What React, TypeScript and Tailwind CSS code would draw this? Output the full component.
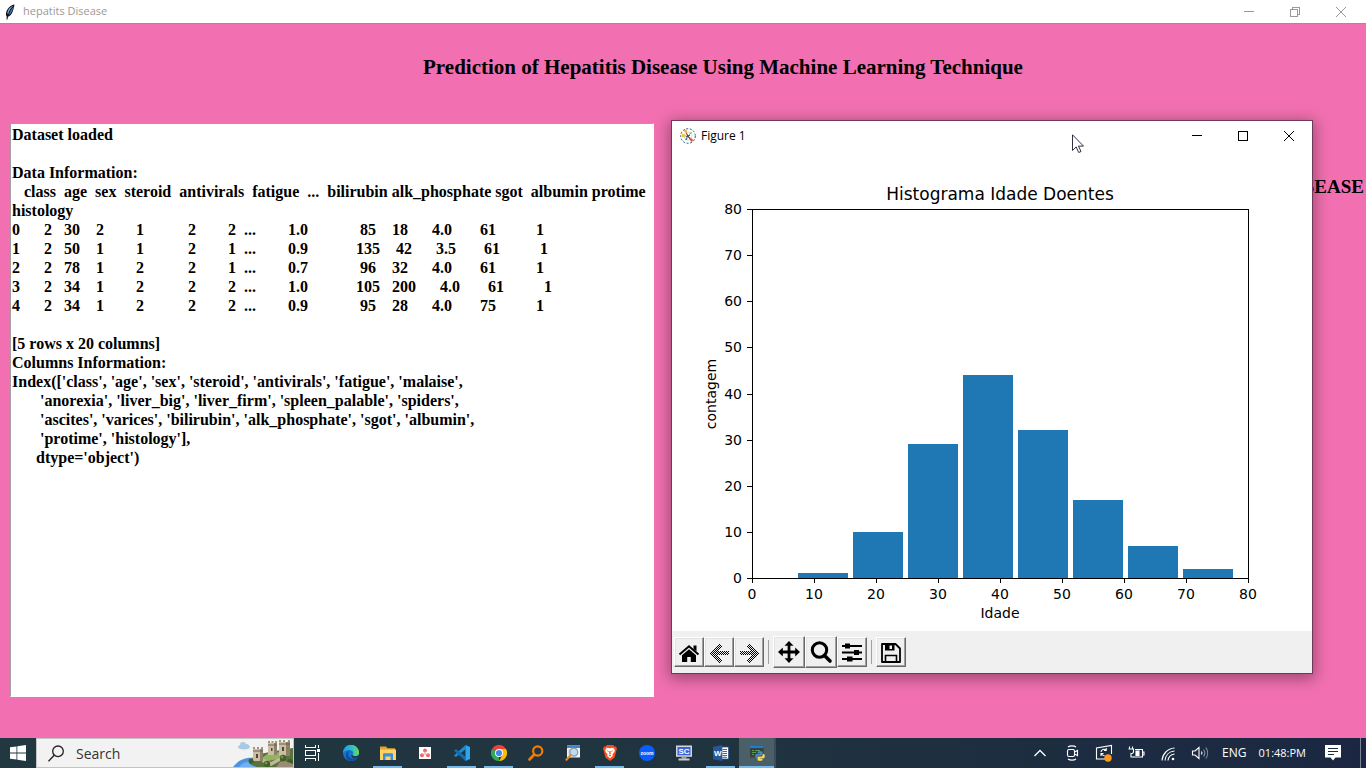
import { clsx } from "clsx";
import type { ReactNode } from "react";

const DATASET_OUTPUT = `Dataset loaded

Data Information:
   class  age  sex  steroid  antivirals  fatigue  ...  bilirubin alk_phosphate sgot  albumin protime  histology
0      2   30    2        1           2        2  ...        1.0             85    18      4.0       61          1
1      2   50    1        1           2        1  ...        0.9            135    42      3.5       61          1
2      2   78    1        2           2        1  ...        0.7             96    32      4.0       61          1
3      2   34    1        2           2        2  ...        1.0            105   200      4.0       61          1
4      2   34    1        2           2        2  ...        0.9             95    28      4.0       75          1

[5 rows x 20 columns]
Columns Information:
Index(['class', 'age', 'sex', 'steroid', 'antivirals', 'fatigue', 'malaise',
       'anorexia', 'liver_big', 'liver_firm', 'spleen_palable', 'spiders',
       'ascites', 'varices', 'bilirubin', 'alk_phosphate', 'sgot', 'albumin',
       'protime', 'histology'],
      dtype='object')`;

/* ---------- Window chrome ---------- */

interface WindowControlsProps {
  maximized?: boolean;
  className?: string;
}

function WindowControls({ maximized, className }: WindowControlsProps) {
  const button = "flex w-[46px] items-center justify-center hover:bg-gray-200";

  return (
    <div className={clsx("flex h-full", className)}>
      <button type="button" aria-label="Minimize" className={button}>
        <svg width="10" height="10" viewBox="0 0 10 10" stroke="currentColor" shapeRendering="crispEdges">
          <path d="M0 4.5h10" />
        </svg>
      </button>
      <button type="button" aria-label="Maximize" className={button}>
        <svg width="10" height="10" viewBox="0 0 10 10" fill="none" stroke="currentColor" shapeRendering="crispEdges">
          {maximized ? <path d="M.5 2.5h7v7h-7zM2.5 2.5v-2h7v7h-2" /> : <path d="M.5.5h9v9h-9z" />}
        </svg>
      </button>
      <button type="button" aria-label="Close" className={button}>
        <svg width="10" height="10" viewBox="0 0 10 10" stroke="currentColor">
          <path d="M0 0l10 10M10 0L0 10" />
        </svg>
      </button>
    </div>
  );
}

function FeatherIcon() {
  return (
    <svg width="10" height="16" viewBox="0 0 10 16">
      <path d="M9.4.4C5.5 1 1.6 4.6 1 9.500c-.1 1.300.2 2.400.7 3L1.500 15.500l1-.1.5-2.700c2.200-.6 4-3 4.800-5.500C8.600 5 9.300 2.500 9.400.4z" fill="#101418" />
      <path d="M8.300 1.500C5.500 2.600 2.800 5.500 2.300 9l.8 1.200C4 7 5.800 4 8.300 1.500z" fill="#7fb0ea" />
      <path d="M8.800 2.200C6.600 4.500 4.600 7.800 3.800 11c1.700-1 2.900-2.700 3.400-4.500.7-1.500 1.300-2.900 1.600-4.300z" fill="#4478bd" />
    </svg>
  );
}

function MatplotlibIcon() {
  return (
    <svg width="16" height="16" viewBox="0 0 16 16">
      <circle cx="8" cy="8" r="7.3" fill="#fff" stroke="#1f577f" strokeDasharray="2 1.6" />
      <circle cx="8" cy="8" r="4" fill="none" stroke="#bbb" strokeWidth=".5" />
      <path d="M8 8L3.500 2.500l3-1.300z" fill="#f7a35c" />
      <path d="M8 8L2 9.500 1.800 5.500z" fill="#e5c93f" />
      <path d="M8 8l5.500 4-2.300 2z" fill="#d9592c" />
      <path d="M8 8l3-4.500 1 1.200z" fill="#8cbf5a" />
      <path d="M8 8l-3 3.500 1.800.8z" fill="#446e9b" />
      <path d="M6.500 5.500l3 5M6 9l4-2" stroke="#333" />
    </svg>
  );
}

/* ---------- Histogram ---------- */

const AXES = { left: 80, top: 58, width: 496, height: 369 };
const MAX = 80;
const TICKS = [0, 10, 20, 30, 40, 50, 60, 70, 80];
const COUNTS = [1, 10, 29, 44, 32, 17, 7, 2];
const FIRST_AGE = 7;
const BIN = 8.875;

function xAt(age: number) {
  return AXES.left + (age / MAX) * AXES.width;
}

function yAt(count: number) {
  return AXES.top + AXES.height - (count / MAX) * AXES.height;
}

function Histogram() {
  return (
    <svg
      viewBox="0 0 640 480"
      className="block w-full bg-white font-['DejaVu_Sans',sans-serif] text-[14px]"
      role="img"
      aria-label="Histograma Idade Doentes"
    >
      <text x="328" y="49" textAnchor="middle" className="text-[17px]">
        Histograma Idade Doentes
      </text>

      <g fill="#1f77b4" shapeRendering="crispEdges">
        {COUNTS.map((count, i) => {
          const start = Math.round(xAt(FIRST_AGE + BIN * (i + 0.05)));
          const top = Math.round(yAt(count));
          return (
            <rect key={i} x={start} y={top} width={50} height={AXES.top + AXES.height - top} />
          );
        })}
      </g>

      <g stroke="#000" fill="none" shapeRendering="crispEdges">
        <rect x={AXES.left + 0.5} y={AXES.top + 0.5} width={AXES.width} height={AXES.height} />
        {TICKS.map((tick) => (
          <path
            key={tick}
            d={`M${Math.round(xAt(tick)) + 0.5} ${AXES.top + AXES.height}v5M${AXES.left} ${Math.round(yAt(tick)) + 0.5}h-5`}
          />
        ))}
      </g>

      {TICKS.map((tick) => (
        <g key={tick}>
          <text x={xAt(tick)} y="448" textAnchor="middle">{tick}</text>
          <text x="70" y={yAt(tick) + 5} textAnchor="end">{tick}</text>
        </g>
      ))}

      <text x="328" y="467" textAnchor="middle">Idade</text>
      <text transform="translate(44 243) rotate(-90)" textAnchor="middle">contagem</text>
    </svg>
  );
}

/* ---------- Figure toolbar ---------- */

interface ToolButtonProps {
  label: string;
  large?: boolean;
  disabled?: boolean;
  children: ReactNode;
}

function ToolButton({ label, large, disabled, children }: ToolButtonProps) {
  return (
    <button
      type="button"
      aria-label={label}
      disabled={disabled}
      className={clsx(
        "flex items-center justify-center border border-t-white border-l-white border-r-[#696969] border-b-[#696969] bg-[#f0f0f0] shadow-[inset_-1px_-1px_0_#a0a0a0,inset_1px_1px_0_#e3e3e3]",
        large ? "size-8" : "size-[30px]"
      )}
    >
      <svg width="24" height="24" viewBox="0 0 24 24">
        {children}
      </svg>
    </button>
  );
}

function ToolSeparator() {
  return <div className="mx-1 h-6 w-px bg-[#a0a0a0]" />;
}

function FigureToolbar() {
  return (
    <div className="flex h-[42px] items-center bg-[#f0f0f0] px-0.5">
      <ToolButton label="Home">
        <path d="M12 9.200l7 6V22h-5.200v-5h-3.600v5H5v-6.800z" />
        <path d="M2.500 14.500L12 6.300l9.500 8.200" fill="none" stroke="#000" strokeWidth="2" />
        <path d="M16.500 5.500h3v6l-3-2.600z" />
      </ToolButton>
      <ToolButton label="Back" disabled>
        <defs>
          <pattern id="stipple" width="2" height="2" patternUnits="userSpaceOnUse">
            <path d="M0 0h1v1H0zM1 1h1v1H1z" fill="#000" />
          </pattern>
        </defs>
        <path d="M2 13l10-10 3 3-5 5h11.500v4H10l5 5-3 3z" fill="url(#stipple)" shapeRendering="crispEdges" />
      </ToolButton>
      <ToolButton label="Forward" disabled>
        <path d="M22 13L12 3 9 6l5 5H2.500v4H14l-5 5 3 3z" fill="url(#stipple)" shapeRendering="crispEdges" />
      </ToolButton>
      <ToolSeparator />
      <ToolButton label="Pan" large>
        <path d="M12 1l4.500 4.800h-3.100v4.800h4.800V7.500L23 12l-4.800 4.500v-3.100h-4.800v4.800h3.100L12 23l-4.500-4.800h3.100v-4.800H5.800v3.100L1 12l4.800-4.500v3.100h4.800V5.800H7.500z" />
      </ToolButton>
      <ToolButton label="Zoom" large>
        <circle cx="10.5" cy="10" r="7.2" fill="none" stroke="#000" strokeWidth="3" />
        <path d="M15.500 15.500l5.500 5.500" stroke="#000" strokeWidth="3.6" strokeLinecap="round" />
      </ToolButton>
      <ToolButton label="Subplots">
        <path d="M2 6h20M2 12.500h20M2 19h20" stroke="#000" strokeWidth="2" />
        <path d="M5 3.500h5v5H5zM14 10h5v5h-5zM7 16.500h5.500v5H7z" />
      </ToolButton>
      <ToolSeparator />
      <ToolButton label="Save">
        <path d="M3 4h13.500l4.500 4.500V22H3z" fill="none" stroke="#000" strokeWidth="1.8" strokeLinejoin="round" />
        <path d="M6 4h9.500v6.500H6zM10.500 5.500v3.500h2.500V5.500z" fillRule="evenodd" />
        <path d="M6.500 22v-6.500h11V22" fill="none" stroke="#000" strokeWidth="1.6" />
      </ToolButton>
    </div>
  );
}

function FigureWindow() {
  return (
    <section
      aria-label="Figure 1"
      className="absolute top-24 right-[53px] w-[642px] border border-[#6f3a58] bg-white shadow-[0_3px_14px_2px_rgba(0,0,0,0.35)]"
    >
      <header className="flex h-[30px] items-center pl-2 text-black">
        <MatplotlibIcon />
        <h2 className="flex-1 pl-[5px] font-['Open_Sans',sans-serif] text-[12px]">Figure 1</h2>
        <WindowControls />
      </header>
      <Histogram />
      <FigureToolbar />

      {/* Mouse pointer */}
      <svg width="12" height="19" viewBox="0 0 12 19" className="absolute top-[13px] right-[228px]">
        <path d="M.5.8v15.700l3.700-3.600 2.500 5.600 2.300-1-2.500-5.400h5z" fill="#fff" stroke="#1a1a2a" strokeWidth=".9" />
      </svg>
    </section>
  );
}

/* ---------- Taskbar icons ---------- */

function TaskIcon({ children }: { children: ReactNode }) {
  return (
    <svg width="16" height="16" viewBox="0 0 16 16">
      {children}
    </svg>
  );
}

const EdgeIcon = (
  <TaskIcon>
    <defs>
      <linearGradient id="edgeTop" x1="0" x2="1">
        <stop offset="0" stopColor="#1c9be6" />
        <stop offset=".6" stopColor="#2fc3c0" />
        <stop offset="1" stopColor="#6edc4b" />
      </linearGradient>
    </defs>
    <circle cx="8" cy="8" r="8" fill="#1476cf" />
    <path d="M0 8a8 8 0 0 1 16-.5c.1 2.300-1.600 3.700-3.800 3.700-1.600 0-2.700-.6-2.700-1.200s.9-.8.8-2.200C10.100 6 8.400 4.900 6.300 4.900 3.500 4.900.8 6.200 0 8z" fill="url(#edgeTop)" />
    <path d="M5.300 8.500c0 4 3.500 6 8.200 4.700A8 8 0 0 1 8 16c-3.500-.3-5.500-3-5.200-6 .2-2 1.700-3.700 3.500-4.200C5.500 6.500 5.300 7.500 5.300 8.500z" fill="#0f4f9e" />
    <path d="M9.500 9.800c-.3.700 1.100 1.500 2.800 1.500 1.500 0 2.700-.6 3.400-1.800-.3 1.500-.9 2.700-1.700 3.500-2 .6-4.600.2-5.500-1.500-.4-.9 0-1.500 1-1.700z" fill="#233842" />
  </TaskIcon>
);

const ExplorerIcon = (
  <TaskIcon>
    <path d="M0 1.500h6l1.500 1.700H15v3H0z" fill="#e0a62b" />
    <path d="M0 4.500h16V15H0z" fill="#fcd364" />
    <path d="M3 15V9.500c0-.8.500-1.300 1.200-1.300h7.600c.7 0 1.200.5 1.200 1.300V15h-2.500v-3.500h-5V15z" fill="#3d8fd8" />
  </TaskIcon>
);

const ClusterIcon = (
  <TaskIcon>
    <path d="M2 2h12v12H2z" fill="#fff" />
    <g fill="#ef6464">
      <circle cx="8" cy="5.5" r="1.9" />
      <circle cx="5" cy="10.3" r="2" />
      <circle cx="11" cy="10.3" r="2" />
    </g>
    <path d="M8 6v3M5 10l3-1 3 1" stroke="#ef9a9a" strokeWidth=".7" fill="none" />
  </TaskIcon>
);

const VsCodeIcon = (
  <TaskIcon>
    <path d="M11.500 4.300L2 12 .3 10.900v-.7L11.500.1z" fill="#1f8ad2" />
    <path d="M11.500 11.700L2 4 .3 5.200v.7L11.500 15.900z" fill="#0f6fb5" />
    <path d="M11.500 0L16 2v12l-4.500 2z" fill="#2ba5f0" />
  </TaskIcon>
);

const ChromeIcon = (
  <TaskIcon>
    <path d="M8 8L1 4a8 8 0 0 1 14 0z" fill="#ea4335" />
    <path d="M8 8v8A8 8 0 0 1 1 4z" fill="#34a853" />
    <path d="M8 4h7A8 8 0 0 1 8 16l3.500-6z" fill="#fbbc04" />
    <circle cx="8" cy="8" r="4" fill="#fff" />
    <circle cx="8" cy="8" r="3.1" fill="#4285f4" />
  </TaskIcon>
);

const OrangeSearchIcon = (
  <TaskIcon>
    <circle cx="9.7" cy="6" r="4.6" fill="none" stroke="#f57c00" strokeWidth="2.2" />
    <path d="M6.300 9.500L1.500 14.500" stroke="#f57c00" strokeWidth="2.6" strokeLinecap="round" />
  </TaskIcon>
);

const EventViewerIcon = (
  <TaskIcon>
    <path d="M2 .5h13v12H2z" fill="#f3f4f5" />
    <path d="M2 .5h13V3H2z" fill="#3f82c9" />
    <path d="M3.500 5h4M3.500 7h3M3.500 9h3" stroke="#999" strokeWidth=".8" />
    <circle cx="8.8" cy="7.2" r="4" fill="#b9dcf3" stroke="#8b9aa5" strokeWidth="1.2" />
    <path d="M5.800 10L1.500 14.700" stroke="#d78a3c" strokeWidth="2.2" strokeLinecap="round" />
  </TaskIcon>
);

const BraveIcon = (
  <TaskIcon>
    <path d="M5 0h6l1.500 1.500H14L15 4l-.6 1.500-1.600 6.300c-.2.700-.5 1.100-1.100 1.500L8 16l-3.700-2.700c-.6-.4-.9-.8-1.100-1.500L1.600 5.500 1 4l1-2.500h1.500z" fill="#f4511e" />
    <path d="M8 3.200l3.300-.5 1.500 2.300-.5 2-2 2.500.6 1.300L8 13.200 5.100 10.800l.6-1.300-2-2.500-.5-2 1.500-2.300z" fill="#fff" />
    <path d="M4.500 5.500l2.300.6L6.500 7zM11.500 5.500l-2.300.6.3.9zM7.400 6h1.200l.2 3L8 9.500 7.200 9zM6.500 10.500L8 9.800l1.500.7L8 11.500z" fill="#f4511e" />
  </TaskIcon>
);

const ZoomIcon = (
  <TaskIcon>
    <circle cx="8" cy="8" r="8" fill="#0b5cff" />
    <text x="8" y="10" textAnchor="middle" fill="#fff" className="font-['Liberation_Sans',sans-serif] text-[5px] font-bold">
      zoom
    </text>
  </TaskIcon>
);

const SafeClientIcon = (
  <TaskIcon>
    <path d="M0 .5h16v11.300H0z" fill="#d5d6da" />
    <path d="M1.500 2h13v8.300h-13z" fill="#3f62d8" />
    <path d="M5.500 11.800h5v2h-5z" fill="#9a9ba0" />
    <path d="M2.500 13.500h11v2h-11z" fill="#c9cace" />
    <text x="8" y="9" textAnchor="middle" fill="#fff" className="font-['Liberation_Sans',sans-serif] text-[8px] font-bold">
      SC
    </text>
  </TaskIcon>
);

const WordIcon = (
  <TaskIcon>
    <path d="M8 2h7.500v12H8z" fill="#fff" stroke="#2a5699" strokeWidth=".8" />
    <path d="M9.500 4.500h4.500M9.500 6.500h4.500M9.500 8.500h4.500M9.500 10.500h4.500M9.500 12.300h4.500" stroke="#2a5699" strokeWidth=".9" />
    <path d="M0 1.800L9.300 0v16L0 14.200z" fill="#2a5699" />
    <text x="4.7" y="11" textAnchor="middle" fill="#fff" className="font-['Liberation_Sans',sans-serif] text-[8px] font-bold">
      W
    </text>
  </TaskIcon>
);

const PythonIcon = (
  <TaskIcon>
    <path d="M1 1h13.500v11.500H1z" fill="#39413f" />
    <path d="M1 1h13.500v2H1z" fill="#1a7fd4" />
    <path d="M3 5.500h2M6 5.500h5M3 7.500h4M3 9.500h2" stroke="#5aa35a" strokeWidth=".9" />
    <path d="M9.800 6.200h2.400c.9 0 1.400.5 1.400 1.400v1.800c0 .9-.5 1.300-1.300 1.300H9.800c-.9 0-1.400.6-1.400 1.500v1H7.500c-.9 0-1.300-1-1.300-2.100s.5-2 1.400-2H11v-.5H8.500v-1c0-.9.500-1.400 1.300-1.400z" fill="#4b8bbe" />
    <path d="M12.200 15.800H10c-.9 0-1.400-.5-1.400-1.300v-1.800c0-.9.500-1.300 1.300-1.300h2.400c.9 0 1.400-.6 1.400-1.500V9h.8c.9 0 1.300.9 1.300 2s-.4 2.200-1.300 2.200h-3.400v.5h2.400v.8c0 .9-.5 1.300-1.300 1.300z" fill="#ffd845" />
  </TaskIcon>
);

const TASKS = [
  { label: "Microsoft Edge", icon: EdgeIcon },
  { label: "File Explorer", icon: ExplorerIcon, running: true },
  { label: "Cluster Manager", icon: ClusterIcon },
  { label: "Visual Studio Code", icon: VsCodeIcon, running: true },
  { label: "Google Chrome", icon: ChromeIcon, running: true },
  { label: "Everything", icon: OrangeSearchIcon },
  { label: "Event Viewer", icon: EventViewerIcon },
  { label: "Brave", icon: BraveIcon, running: true },
  { label: "Zoom", icon: ZoomIcon },
  { label: "SC Client", icon: SafeClientIcon },
  { label: "Word", icon: WordIcon, running: true },
  { label: "Python", icon: PythonIcon, running: true, active: true },
];

/* Castle on an island shown at the right end of the search box */
function SearchHighlight() {
  return (
    <svg width="60" height="28" viewBox="0 0 60 28" className="absolute right-0 bottom-0">
      <path d="M0 28c5-6 11-10 21-9l14 9z" fill="#4f93de" />
      <path d="M6 28c4-5 9-6 14-5l8 5z" fill="#6fb0f2" />
      <path d="M16 24c3-6 9-9 16-10 10-2 20-4 28-5v19H24c-3-1-6-2-8-4z" fill="#58743c" />
      <path d="M26 21l10-7 14-1-5 7-10 2z" fill="#93b35c" />
      <path d="M29 19l9 4 9-5v4l-9 5-9-4z" fill="#c2b59b" />
      <path d="M20 10h10v12H20zM35 4h9v12h-9zM46 3h11v14H46z" fill="#cabda2" />
      <path d="M27 10h3v12h-3zM41 4h3v12h-3zM53 3h4v14h-4z" fill="#8d806a" />
      <path d="M20 12h10M35 6h9M46 5h11" stroke="#6f6554" />
      <path d="M20 8h2v2h-2zM24 8h2v2h-2zM28 8h2v2h-2zM35 2h2v2h-2zM38.500 2h2v2h-2zM42 2h2v2h-2zM46 1h2v2h-2zM50 1h2v2h-2zM55 1h2v2h-2z" fill="#a39679" />
      <path d="M23 15h2v4h-2zM38 9h1.500v3H38zM49 8h2v4h-2z" fill="#4e4638" />
      <g fill="#3f5f2a">
        <circle cx="34" cy="25" r="3.2" />
        <circle cx="18" cy="22" r="2.5" />
        <circle cx="50" cy="19" r="3.2" />
        <circle cx="57" cy="23" r="3" />
      </g>
      <g fill="#6f9144">
        <circle cx="33" cy="24" r="1.5" />
        <circle cx="49" cy="18" r="1.5" />
      </g>
      <path d="M43 28l4-5 5-1 8 3v3z" fill="#9a8c74" />
      <g fill="#a9c9e4">
        <ellipse cx="11" cy="8" rx="6" ry="2.6" />
        <circle cx="10" cy="6" r="3" />
        <circle cx="14" cy="7" r="2" />
      </g>
    </svg>
  );
}

function TrayButton({ label, children }: { label: string; children: ReactNode }) {
  return (
    <button type="button" aria-label={label} className="flex w-8 items-center justify-center">
      <svg width="18" height="18" viewBox="0 0 18 18" fill="none" stroke="#fff" strokeWidth="1.1">
        {children}
      </svg>
    </button>
  );
}

function Tray() {
  return (
    <div className="ml-auto flex h-full text-white">
      <TrayButton label="Show hidden icons">
        <path d="M3.500 12L9 6.500l5.500 5.500" strokeWidth="1.3" />
      </TrayButton>
      <TrayButton label="Meet Now">
        <rect x="4.5" y="5.5" width="7" height="7" rx="1.5" />
        <path d="M11.500 8l3-1.500v5l-3-1.500M5 3c2-1.500 6-1.500 8 0M5 15c2 1.500 6 1.500 8 0" />
      </TrayButton>
      <TrayButton label="Updates">
        <path d="M10 15H1.500V4L16.500 1.500V10" />
        <path d="M6 8a3 3 0 0 1 5-2M11.200 4v2.500H9M6 12V9.500h2.500M6.500 10a3 3 0 0 0 3 1.500" />
        <circle cx="13" cy="14" r="3.7" fill="#ff9a1a" stroke="none" />
      </TrayButton>
      <TrayButton label="Battery">
        <path d="M8 5.500h7.500v7.500H6.500M15.500 8h1.500v3h-1.500" />
        <path d="M9 7h3v4.500H9z" fill="#fff" />
        <path d="M1.500 5h5v2.500a2 2 0 0 1-2.500 2V13h3" />
        <path d="M2.500 5V2.500M5.500 5V2.500" />
      </TrayButton>
      <TrayButton label="Network">
        <circle cx="14" cy="15" r="1.3" fill="#fff" stroke="none" />
        <path d="M3 16.500C3.500 10 8.500 4.500 15.500 4M6 16.500c.5-5 4-9 9.500-9.500M9 16.500c.4-3.300 2.600-6 6.500-6.500" />
      </TrayButton>
      <TrayButton label="Volume">
        <path d="M1.500 7h2.500l4-3.500v11L4 11H1.500z" />
        <path d="M10.500 7.500c.6 1 .6 2 0 3" />
        <path d="M12.500 5.500c1.500 2 1.500 5 0 7M14.800 3.500c2.400 3.200 2.400 7.800 0 11" stroke="#8a94a3" />
      </TrayButton>
      <button type="button" className="ml-1.5 font-['Open_Sans',sans-serif] text-[12px]">ENG</button>
      <button type="button" className="ml-3 font-['Open_Sans',sans-serif] text-[11px]">01:48:PM</button>
      <button type="button" aria-label="Notifications" className="ml-2 flex w-[38px] items-center justify-center">
        <svg width="16" height="16" viewBox="0 0 16 16">
          <path d="M0 0h16v12.500h-5.500L8 15.500l-2.500-3H0z" fill="#fff" />
          <path d="M3 3.500h10M3 6.500h10M3 9.500h6" stroke="#1b2942" />
        </svg>
      </button>
      <button type="button" aria-label="Show desktop" className="ml-2 w-1.5 border-l border-[#7a8494]" />
    </div>
  );
}

function Taskbar() {
  return (
    <footer className="flex h-[30px] shrink-0 bg-linear-to-r from-[#213840] via-[#20343f] to-[#1b2742]">
      <button type="button" aria-label="Start" className="flex w-9 items-center justify-center">
        <svg width="16" height="16" viewBox="0 0 16 16" fill="#fff">
          <path d="M0 2.300L6.500 1.400v6.200H0zM7.300 1.300L16 0v7.600H7.300zM0 8.400h6.500v6.200L0 13.700zM7.300 8.400H16V16l-8.700-1.300z" />
        </svg>
      </button>

      <label className="relative flex w-[258px] items-center border border-[#c4c4c4] bg-[#f2f2f2] pl-[11px]">
        <svg width="16" height="17" viewBox="0 0 16 17" fill="none" stroke="#222" strokeWidth="1.3">
          <circle cx="10" cy="6.3" r="5.3" />
          <path d="M6.200 10.200L.5 16.300" />
        </svg>
        <input
          type="text"
          aria-label="Search"
          placeholder="Search"
          className="w-40 bg-transparent pl-3 font-['Open_Sans',sans-serif] text-[14px] text-[#333] outline-none placeholder:text-[#333]"
        />
        <SearchHighlight />
      </label>

      <button type="button" aria-label="Task View" className="flex w-[38px] items-center justify-center">
        <svg width="18" height="16" viewBox="0 0 18 16" fill="none" stroke="#fff" shapeRendering="crispEdges">
          <path d="M1.500 0v2.500h10V0M1.500 5.500h10v5h-10zM1.500 16v-2.500h10V16M14.500 0v3M14.500 8v8" />
          <path d="M13 4h3v3h-3z" fill="#fff" stroke="none" />
        </svg>
      </button>

      <nav aria-label="Running programs" className="flex">
        {TASKS.map((task) => (
          <button
            key={task.label}
            type="button"
            aria-label={task.label}
            className={clsx(
              "relative flex w-[37px] items-center justify-center",
              task.active && "border-r-2 border-[#3b4d57] bg-[#4b5f69]"
            )}
          >
            {task.icon}
            {task.running && (
              <span
                className={clsx(
                  "absolute bottom-0 h-0.5 bg-[#76b9ed]",
                  task.active ? "inset-x-0" : "inset-x-1"
                )}
              />
            )}
          </button>
        ))}
      </nav>

      <Tray />
    </footer>
  );
}

/* ---------- App ---------- */

export default function App() {
  return (
    <div className="flex min-h-screen flex-col bg-[#f270b1]">
      <header className="flex h-6 shrink-0 items-center border-b border-[#c07a9d] bg-white pl-[5px] text-[#999]">
        <FeatherIcon />
        <span className="flex-1 pl-2 font-['Open_Sans',sans-serif] text-[11px]">hepatits Disease</span>
        <WindowControls maximized className="pr-0.5" />
      </header>

      <main className="relative flex flex-1 flex-col font-['Liberation_Serif',serif] font-bold text-black">
        <h1 className="h-[99px] pt-[29px] pl-20 text-center text-[21px] leading-7">
          Prediction of Hepatitis Disease Using Machine Learning Technique
        </h1>

        <div className="flex flex-1 pb-[41px] pl-2.5">
          <textarea
            readOnly
            aria-label="Dataset output"
            value={DATASET_OUTPUT}
            className="flex-1 resize-none border border-t-[#a0a0a0] border-r-white border-b-white border-l-[#a0a0a0] bg-white p-px text-[16px] leading-[19px] outline-none"
          />
          <div className="w-[712px] shrink-0 pt-[52px] pr-0.5 text-right text-[19px] leading-6">DISEASE</div>
        </div>

        <div className="font-normal">
          <FigureWindow />
        </div>
      </main>

      <Taskbar />
    </div>
  );
}
